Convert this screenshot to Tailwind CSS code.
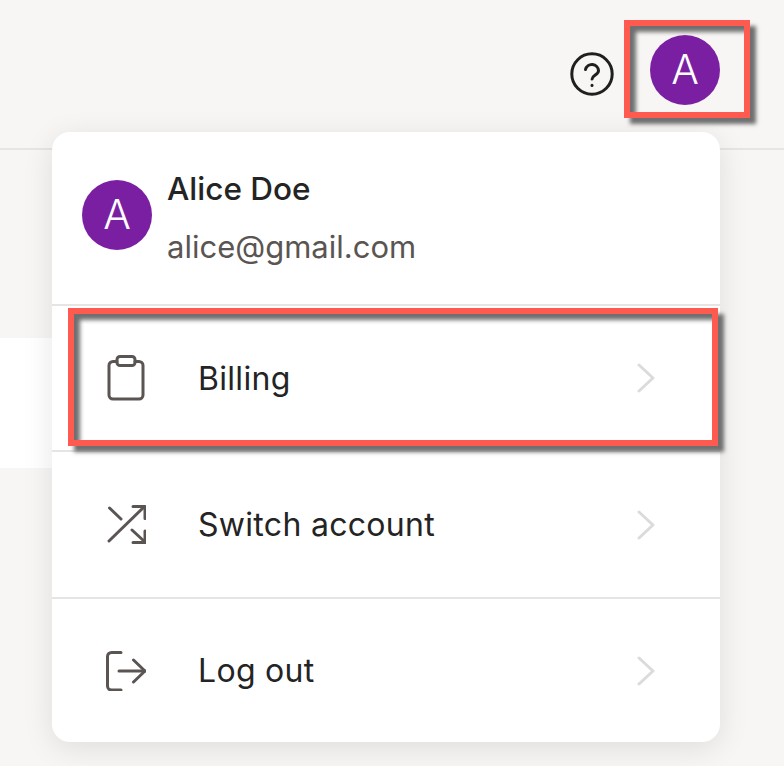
<!DOCTYPE html>
<html lang="en">
<head>
    <meta charset="UTF-8">
    <meta name="viewport" content="width=device-width, initial-scale=1.0">
    <title>Account menu</title>
    <script src="https://cdn.jsdelivr.net/npm/@tailwindcss/browser@4"></script>
</head>
<body class="bg-[#f7f6f5] font-['Inter',sans-serif] text-[#242424]">
    <div class="relative w-[784px] h-[766px] overflow-hidden">
        <!-- Top bar -->
        <header class="h-[150px] border-b-2 border-[#e6e5e4] flex justify-end items-start pr-[64px] pt-[35px] gap-[36px]">
            <svg class="mt-[17px]" width="44" height="44" viewBox="0 0 44 44" fill="none" stroke="#1f1f1f" stroke-width="3" stroke-linecap="round" stroke-linejoin="round">
                <circle cx="22" cy="22" r="20.2"/>
                <path d="M15.5 17.500a6.600 6.600 0 0 1 13 1.200c0 4-6.200 4.600-6.400 8.300"/>
                <path d="M22 33.200v.2"/>
            </svg>
            <div class="w-[70px] h-[70px] rounded-full bg-[#7b1fa2] text-white text-[41px] font-light flex items-center justify-center">A</div>
        </header>

        <!-- Card behind the menu -->
        <div class="mt-[188px] w-[60px] h-[130px] bg-white"></div>

        <!-- Account menu -->
        <div class="absolute left-[52px] top-[132px] w-[668px] h-[610px] bg-white rounded-[18px] shadow-[0_6px_30px_rgba(0,0,0,0.1)] flex flex-col">
            <div class="h-[174px] border-b-2 border-[#e6e5e4] flex pl-[30px] pt-[48px] gap-[15px]">
                <div class="w-[70px] h-[70px] rounded-full bg-[#7b1fa2] text-white text-[41px] font-light flex items-center justify-center">A</div>
                <div class="-mt-[11px]">
                    <p class="text-[31.5px] font-[450] leading-[40px]">Alice Doe</p>
                    <p class="text-[31px] leading-[40px] mt-[18px] text-[#5a5552]">alice@gmail.com</p>
                </div>
            </div>

            <a class="h-[146px] border-b-2 border-[#e6e5e4] flex items-center pl-[54px] pr-[65px]">
                <svg class="w-[40px] shrink-0" width="40" height="46" viewBox="0 0 40 46" fill="none" stroke="#5a5552" stroke-width="3" stroke-linecap="round" stroke-linejoin="round">
                    <path d="M11 6.500H7a4 4 0 0 0-4 4V40a4 4 0 0 0 4 4h26a4 4 0 0 0 4-4V10.500a4 4 0 0 0-4-4h-4"/>
                    <rect x="11" y="1.500" width="18" height="9" rx="3"/>
                </svg>
                <span class="ml-[52px] mt-[2px] flex-1 text-[32px] tracking-[0.3px]">Billing</span>
                <svg width="18" height="30" viewBox="0 0 18 30" fill="none" stroke="#dcdbda" stroke-width="3" stroke-linecap="round" stroke-linejoin="round"><path d="M2 2l14 13L2 28"/></svg>
            </a>

            <a class="h-[147px] border-b-2 border-[#e6e5e4] flex items-center pl-[54px] pr-[65px]">
                <svg class="w-[40px] shrink-0" width="40" height="40" viewBox="0 0 40 40" fill="none" stroke="#5a5552" stroke-width="3" stroke-linecap="round" stroke-linejoin="round">
                    <path d="M3 36L38 2"/>
                    <path d="M27 1.500h12v12"/>
                    <path d="M3.500 3L15 14"/>
                    <path d="M26 25l13 12"/>
                    <path d="M27 37.500h12V26"/>
                </svg>
                <span class="ml-[52px] flex-1 text-[32px] tracking-[0.3px]">Switch account</span>
                <svg width="18" height="30" viewBox="0 0 18 30" fill="none" stroke="#dcdbda" stroke-width="3" stroke-linecap="round" stroke-linejoin="round"><path d="M2 2l14 13L2 28"/></svg>
            </a>

            <a class="flex-1 flex items-center pl-[54px] pr-[65px]">
                <svg class="w-[40px] shrink-0" width="40" height="40" viewBox="0 0 40 40" fill="none" stroke="#5a5552" stroke-width="3" stroke-linecap="round" stroke-linejoin="round">
                    <path d="M15 1.500H5.500a4 4 0 0 0-4 4V35a4 4 0 0 0 4 4H15"/>
                    <path d="M13 20h26"/>
                    <path d="M27.500 9L39 20 27.500 31"/>
                </svg>
                <span class="ml-[52px] flex-1 text-[32px] tracking-[0.3px]">Log out</span>
                <svg width="18" height="30" viewBox="0 0 18 30" fill="none" stroke="#dcdbda" stroke-width="3" stroke-linecap="round" stroke-linejoin="round"><path d="M2 2l14 13L2 28"/></svg>
            </a>
        </div>

        <!-- Red highlight boxes -->
        <div class="absolute left-[624px] top-[20px] w-[126px] h-[98px] border-[6px] border-[#ff5a4f] shadow-[6px_6px_4px_#6f6f6f,inset_6px_6px_4px_#6f6f6f]"></div>
        <div class="absolute left-[68px] top-[308px] w-[650px] h-[138px] border-[6px] border-[#ff5a4f] shadow-[6px_6px_4px_#6f6f6f,inset_6px_6px_4px_#6f6f6f]"></div>
    </div>
</body>
</html>
